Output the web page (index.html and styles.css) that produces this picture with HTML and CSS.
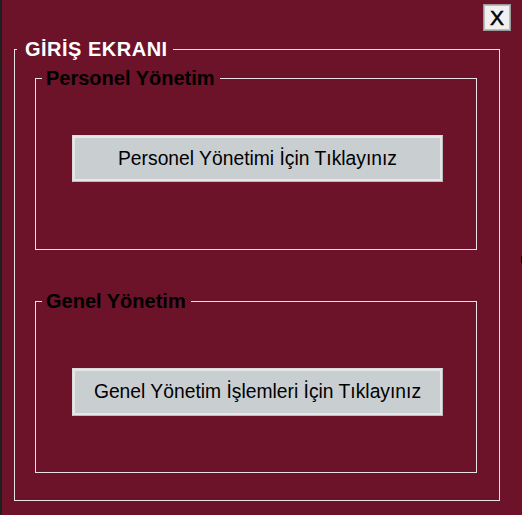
FILE: index.html
```html
<!DOCTYPE html>
<html lang="tr">
<head>
<meta charset="utf-8">
<title>GİRİŞ EKRANI</title>
<link rel="stylesheet" href="styles.css">
</head>
<body>
  <div class="topbar">
    <button class="close-btn" type="button">X</button>
  </div>
  <fieldset class="group group-main">
    <legend class="legend legend-main">GİRİŞ EKRANI</legend>
    <fieldset class="group group-sub group-personel">
      <legend class="legend legend-sub">Personel Yönetim</legend>
      <button class="action-btn action-personel" type="button">Personel Yönetimi İçin Tıklayınız</button>
    </fieldset>
    <fieldset class="group group-sub group-genel">
      <legend class="legend legend-sub">Genel Yönetim</legend>
      <button class="action-btn action-genel" type="button">Genel Yönetim İşlemleri İçin Tıklayınız</button>
    </fieldset>
  </fieldset>
  <span class="edge-mark"></span>
</body>
</html>
```
FILE: styles.css
```css
html {
  background: #6c1229;
}
body {
  margin: 0;
  height: 515px;
  box-sizing: border-box;
  border-left: 2px solid #1f1f1f;
  background: #6c1229;
  font-family: "Liberation Sans", Arial, sans-serif;
  overflow: hidden;
  position: relative;
}
.topbar {
  display: flex;
  justify-content: flex-end;
  height: 31px;
  box-sizing: border-box;
  padding: 4px 11px 0 0;
}
.close-btn {
  width: 28px;
  height: 27px;
  margin: 0;
  padding: 0;
  box-sizing: border-box;
  border: 1px solid #9a9a9a;
  box-shadow: inset 0 0 0 1px #bdbdbd;
  background: #f0f0f0;
  color: #000;
  font-family: "Liberation Sans", Arial, sans-serif;
  font-size: 21px;
  line-height: 25px;
  text-align: center;
  -webkit-text-stroke: 0.5px #000;
}
.group {
  margin: 0;
  min-width: 0;
  box-sizing: border-box;
  border: 1px solid #e9e2e4;
}
.group-main {
  margin: 7px 0 0 12px;
  width: 486px;
  padding: 6px 22px 27px 2px;
}
.legend {
  margin: 0;
  font-weight: bold;
  font-size: 20px;
  line-height: 23px;
}
.legend-main {
  color: #ffffff;
  letter-spacing: 0.5px;
  padding: 0 5px 0 8px;
}
.legend-sub {
  color: #000000;
  padding: 0 5px 0 4px;
}
.group-sub {
  margin-left: 18px;
  width: 442px;
  padding-left: 6px;
  padding-right: 0;
}
.group-personel {
  padding-top: 45px;
  padding-bottom: 67px;
}
.group-genel {
  margin-top: 40px;
  padding-top: 55px;
  padding-bottom: 56px;
}
.action-btn {
  display: block;
  margin: 0 0 0 30px;
  width: 371px;
  padding: 0;
  box-sizing: border-box;
  border: 1px solid #b9bcbe;
  border-top-color: #dcdcdc;
  border-left-color: #dcdcdc;
  box-shadow: inset 0 0 0 2px #e4e6e7;
  background: #c9ced1;
  color: #000;
  font-family: "Liberation Sans", Arial, sans-serif;
  font-size: 19.3px;
  text-align: center;
}
.action-personel {
  height: 47px;
}
.action-genel {
  height: 48px;
}
.edge-mark {
  position: absolute;
  right: 0;
  top: 256px;
  width: 1px;
  height: 7px;
  background: #000;
}
```
